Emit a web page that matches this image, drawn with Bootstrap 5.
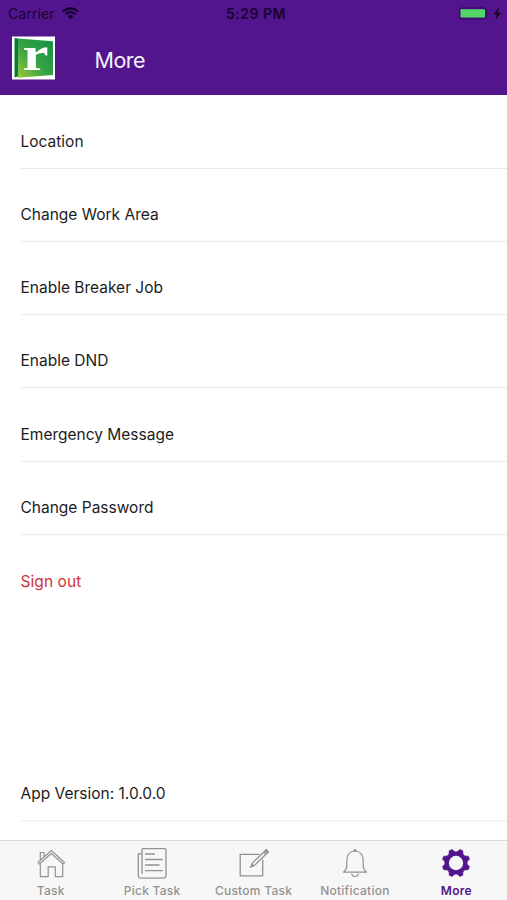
<!DOCTYPE html>
<html lang="en">
<head>
<meta charset="utf-8">
<meta name="viewport" content="width=device-width, initial-scale=1">
<title>More</title>
<link href="https://cdn.jsdelivr.net/npm/bootstrap@5.3.0/dist/css/bootstrap.min.css" rel="stylesheet">
<style>
body { font-family: Inter, "Liberation Sans", sans-serif; color: #1c1c1c; background: #fff; }
.app-shell { height: 900px; }
.app-header { height: 95px; background: #53158d; }
.status-row { display: grid; grid-template-columns: 1fr auto 1fr; height: 28px; padding: 0 5px 0 8px; color: #170330; font-size: 14px; line-height: 28px; letter-spacing: .1px; }
.status-row .wifi { margin-left: 7px; margin-top: -1px; }
.clock { font-weight: 600; font-size: 14px; letter-spacing: .5px; padding-left: 2px; }
.title-row { height: 60px; padding-left: 11px; }
.brand-mark { overflow: visible; }
.page-title { color: #f5effa; font-size: 21.5px; font-weight: 400; letter-spacing: -.5px; margin-left: 38.5px; line-height: 30px; padding-top: 4px; }
.menu-row { height: 73.3px; margin-left: 20.5px; padding: 0 0 14px; font-size: 15.5px; line-height: 24px; border: 0; border-bottom: 1px solid #ebebeb; border-radius: 0; color: inherit; background: transparent; }
.menu-row.first-row { height: 73.6px; }
.menu-row.sign-out { border-bottom-color: transparent; color: #cc3336; padding-bottom: 13px; letter-spacing: .08px; }
.version-row { height: 42px; border-bottom: 2px solid #f5f5f5; margin-bottom: 18px; }
.tab-strip { height: 60px; background: #f7f7f7; border-top: 1px solid #d9d9d9; }
.tab-strip .nav-link { padding: 5px 0 0; color: #929292; font-size: 12px; font-weight: 500; line-height: 16px; letter-spacing: .25px; white-space: nowrap; }
.tab-strip .nav-link.active { color: #53158d; font-weight: 600; }
.tab-strip svg { display: block; margin: 0 auto 3px; }
</style>
</head>
<body>
<div class="app-shell d-flex flex-column overflow-hidden">
  <header class="app-header flex-shrink-0">
    <div class="status-row">
      <div class="d-flex align-items-center">
        <span>Carrier</span>
        <svg class="wifi" width="17" height="13" viewBox="0 0 17 13" fill="none" stroke="#12022a" stroke-width="2.2">
          <path d="M.8 4.500Q8.500-2 16.200 4.500M3.500 7.200Q8.500 3 13.500 7.200"/>
          <path d="M5.700 9.200Q8.500 7 11.300 9.200L8.500 12.300Z" fill="#12022a" stroke="none"/>
        </svg>
      </div>
      <span class="clock">5:29 PM</span>
      <div class="d-flex align-items-center justify-content-end">
        <svg width="43" height="14" viewBox="0 0 43 14">
          <rect x=".5" y=".9" width="26.500" height="11" rx="2.500" fill="none" stroke="#2f0b59"/>
          <rect x="1.500" y="2.300" width="24.500" height="8.200" rx="1" fill="#53d769"/>
          <path d="M28.500 4.500q1.800 2 0 4z" fill="#2b0a55"/>
          <path d="M39.400 1.200 35.200 7.300h3L37 11.900 41.400 5.900h-3z" fill="#10021f" stroke="#10021f" stroke-width=".5"/>
        </svg>
      </div>
    </div>
    <div class="title-row d-flex align-items-center">
      <svg class="brand-mark" width="45" height="44" viewBox="0 0 45 44">
        <defs><linearGradient id="leaf" x1="1" y1="0" x2="0" y2="1"><stop offset="0" stop-color="#129247"/><stop offset=".55" stop-color="#38a344"/><stop offset="1" stop-color="#9bc83b"/></linearGradient></defs>
        <rect x="1" y=".5" width="43" height="43" fill="#fff"/>
        <path d="M3.500 2 7 2.500V40.500l-3.500 1z" fill="#087b3f"/>
        <path d="M7 2.500 42 5.200V39L7 41.800z" fill="url(#leaf)"/>
        <text x="11.500" y="33.500" font-family="Liberation Serif, serif" font-weight="700" font-size="49" textLength="26" lengthAdjust="spacingAndGlyphs" fill="#fff">r</text>
      </svg>
      <h1 class="page-title mb-0">More</h1>
    </div>
  </header>
  <main class="flex-grow-1 d-flex flex-column">
    <div class="list-group list-group-flush">
      <a class="menu-row first-row d-flex align-items-end text-decoration-none" href="#">Location</a>
      <a class="menu-row d-flex align-items-end text-decoration-none" href="#">Change Work Area</a>
      <a class="menu-row d-flex align-items-end text-decoration-none" href="#">Enable Breaker Job</a>
      <a class="menu-row d-flex align-items-end text-decoration-none" href="#">Enable DND</a>
      <a class="menu-row d-flex align-items-end text-decoration-none" href="#">Emergency Message</a>
      <a class="menu-row d-flex align-items-end text-decoration-none" href="#">Change Password</a>
      <a class="menu-row sign-out d-flex align-items-end text-decoration-none" href="#">Sign out</a>
    </div>
    <div class="menu-row version-row d-flex align-items-end mt-auto">App Version: 1.0.0.0</div>
  </main>
  <nav class="tab-strip nav nav-justified flex-nowrap flex-shrink-0 text-center">
    <a class="nav-link" href="#">
      <svg width="34" height="34" viewBox="0 0 34 34" fill="none" stroke="#929292" stroke-width="1.200" stroke-linejoin="round">
        <path d="M4 16.500 17.300 4.500 30.500 16.500 29 18 17.300 7.500 5.500 18zM6.300 14.200V6.500h3.800v4.300M6.300 17.500V30.700h7.900v-9.800h7.100v9.800h7.400V17.500"/>
      </svg>Task</a>
    <a class="nav-link" href="#">
      <svg width="34" height="34" viewBox="0 0 34 34" fill="none" stroke="#929292" stroke-width="1.300" stroke-linecap="round">
        <path d="M7.500 2.700H29.700q1.300 0 1.300 1.300V29q0 3.200-3.200 3.200H6.500q-3.200 0-3.200-3.200V7.800H7V27.500M7 7.800V3.200M10.500 8h9M10.500 13.500h17M10.500 19h13.500M10.500 24.700h17"/>
      </svg>Pick Task</a>
    <a class="nav-link" href="#">
      <svg width="34" height="34" viewBox="0 0 34 34" fill="none" stroke="#929292" stroke-width="1.300">
        <path d="M22.500 8.300H3.200V29.800H25.700V13.500M14 20.800l1.800-4.200L29.200 4l2 2L18 19zM26.700 6.400l2 2"/>
        <path d="m14 20.800 1-2.500 1.600 1.500zM28.200 5l1-1.200 2 2-1.200 1.200z" fill="#929292"/>
      </svg>Custom Task</a>
    <a class="nav-link" href="#">
      <svg width="34" height="34" viewBox="0 0 34 34" fill="none" stroke="#929292" stroke-width="1.200" stroke-linejoin="round">
        <path d="M5.500 26.100q3.300-2.600 3.300-6.500v-5.300c0-5.200 3-9.300 8.200-9.300s8.200 4.100 8.200 9.300v5.300q0 3.900 3.300 6.500zM13.800 27.500q0 3 3.200 3t3.200-3"/>
        <circle cx="17" cy="4.400" r="1.500" fill="#929292" stroke="none"/>
      </svg>Notification</a>
    <a class="nav-link active" href="#">
      <svg width="34" height="34" viewBox="0 0 34 34">
        <path d="M20.740 3.510 23.890 4.820Q23.010 10.990 29.180 10.110L30.490 13.260Q25.500 17 30.490 20.740L29.180 23.890Q23.010 23.010 23.890 29.180L20.740 30.490Q17 25.500 13.260 30.490L10.110 29.180Q10.990 23.010 4.820 23.890L3.510 20.740Q8.500 17 3.510 13.260L4.820 10.110Q10.990 10.990 10.110 4.820L13.260 3.510Q17 8.500 20.740 3.510Z" fill="#53158d" stroke="#53158d" stroke-width=".6" stroke-linejoin="round"/>
        <circle cx="17" cy="17" r="7.200" fill="#f7f7f7"/>
      </svg>More</a>
  </nav>
</div>
<script src="https://cdn.jsdelivr.net/npm/bootstrap@5.3.0/dist/js/bootstrap.bundle.min.js"></script>
</body>
</html>
